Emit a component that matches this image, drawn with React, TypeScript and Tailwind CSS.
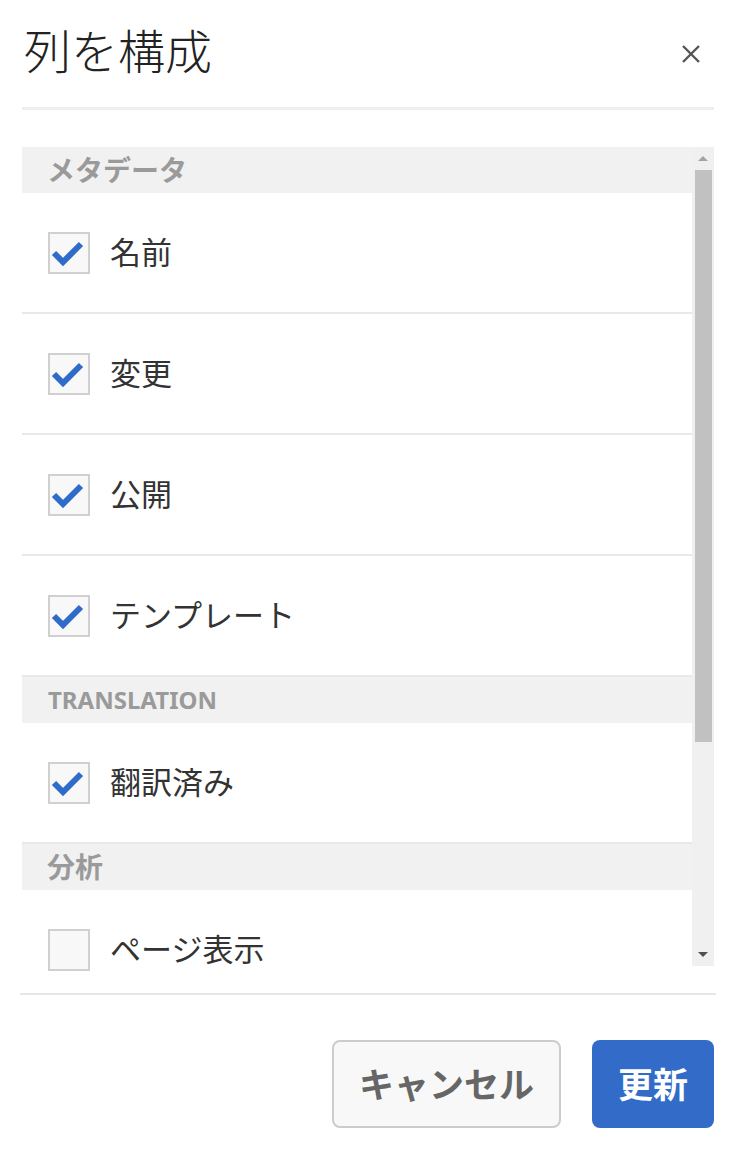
import React from 'react';

type Row =
    | { kind: 'section'; label: string; latin?: boolean }
    | { kind: 'item'; label: string; checked: boolean };

const rows: Row[] = [
    { kind: 'section', label: 'メタデータ' },
    { kind: 'item', label: '名前', checked: true },
    { kind: 'item', label: '変更', checked: true },
    { kind: 'item', label: '公開', checked: true },
    { kind: 'item', label: 'テンプレート', checked: true },
    { kind: 'section', label: 'TRANSLATION', latin: true },
    { kind: 'item', label: '翻訳済み', checked: true },
    { kind: 'section', label: '分析' },
    { kind: 'item', label: 'ページ表示', checked: false },
];

const Checkbox: React.FC<{ checked: boolean }> = ({ checked }) => (
    <div className="w-[42px] h-[42px] shrink-0 border-2 border-[#d0d0d0] bg-[#f8f8f8] flex items-center justify-center">
        {checked && (
            <svg width="34" height="28" viewBox="0 0 34 28" className="-ml-[2px]">
                <path d="M3 14 L12 23 L30 5" fill="none" stroke="#2f6cc9" strokeWidth="6" />
            </svg>
        )}
    </div>
);

const App: React.FC = () => {
    return (
        <div
            className="w-[736px] h-[1156px] bg-white flex flex-col overflow-hidden"
            style={{ fontFamily: '"Noto Sans", "Noto Sans CJK JP", sans-serif' }}
        >
            {/* Header */}
            <div className="h-[107px] px-[24px] flex items-center justify-between">
                <h1 className="text-[47px] leading-none font-light text-[#222] -mt-[4px]">列を構成</h1>
                <button className="w-[22px] h-[22px] mr-[10px] flex items-center justify-center">
                    <svg width="20" height="20" viewBox="0 0 20 20">
                        <path d="M2 2 L18 18 M18 2 L2 18" stroke="#555" strokeWidth="2.4" />
                    </svg>
                </button>
            </div>
            <div className="mx-[22px] h-[3px] bg-[#efefef]" />

            {/* List */}
            <div className="mt-[37px] mx-[22px] h-[828px] flex">
                <div className="flex-1 overflow-hidden">
                    {rows.map((row, i) =>
                        row.kind === 'section' ? (
                            <div key={i} className="h-[46px] bg-[#f1f1f1] pl-[26px] flex items-center">
                                <span
                                    className={`font-bold text-[#9a9a9a] leading-none ${row.latin ? 'text-[24px]' : 'text-[28px] -ml-[1px]'}`}
                                >
                                    {row.label}
                                </span>
                            </div>
                        ) : (
                            <div key={i} className="h-[121px] shrink-0 border-b-2 border-[#e8e8e8] pl-[26px] flex items-center">
                                <Checkbox checked={row.checked} />
                                <span className="ml-[20px] text-[31px] leading-none text-[#333]">{row.label}</span>
                            </div>
                        )
                    )}
                </div>
                {/* Scrollbar */}
                <div className="w-[22px] h-[819px] bg-[#f0f0f0] flex flex-col items-center">
                    <div className="h-[23px] flex items-center justify-center">
                        <div className="w-0 h-0 border-l-[5px] border-r-[5px] border-b-[5px] border-l-transparent border-r-transparent border-b-[#a3a3a3]" />
                    </div>
                    <div className="w-[17px] h-[572px] bg-[#c1c1c1]" />
                    <div className="flex-1" />
                    <div className="h-[23px] flex items-center justify-center">
                        <div className="w-0 h-0 border-l-[5px] border-r-[5px] border-t-[5px] border-l-transparent border-r-transparent border-t-[#505050]" />
                    </div>
                </div>
            </div>

            <div className="mt-[18px] mx-[20px] h-[2px] bg-[#e6e6e6]" />

            {/* Footer */}
            <div className="mt-[45px] pr-[22px] flex justify-end gap-[31px]">
                <button className="w-[229px] h-[88px] rounded-[8px] border-2 border-[#cccccc] bg-[#f8f8f8] text-[35px] font-bold text-[#666] leading-none">
                    キャンセル
                </button>
                <button className="w-[122px] h-[88px] rounded-[8px] bg-[#326bc8] text-[35px] font-bold text-white leading-none">
                    更新
                </button>
            </div>
        </div>
    );
};

export default App;
